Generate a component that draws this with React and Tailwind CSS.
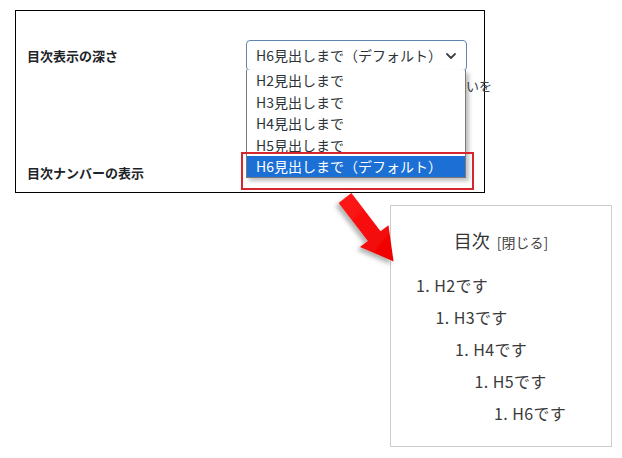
import React from "react";
import { ChevronDown } from "lucide-react";

const jp = { fontFamily: '"Noto Sans CJK JP", "Noto Sans", sans-serif' };

function Arrow() {
  return (
    <svg className="absolute left-0 top-0 pointer-events-none" width="622" height="458" viewBox="0 0 622 458">
      <defs>
        <filter id="sh" x="-30%" y="-30%" width="160%" height="160%">
          <feDropShadow dx="-3" dy="3" stdDeviation="2" floodColor="#777" floodOpacity="0.55" />
        </filter>
        <linearGradient id="rg" x1="0" y1="0" x2="1" y2="1">
          <stop offset="0" stopColor="#ff1a1a" />
          <stop offset="1" stopColor="#ee0000" />
        </linearGradient>
      </defs>
      <polygon
        filter="url(#sh)"
        fill="url(#rg)"
        points="338.6,202.9 351.4,193.1 380.6,231.2 388.5,225.2 393.6,261.5 359.9,247.0 367.8,241.0"
      />
    </svg>
  );
}

export default function App() {
  const items = ["H2見出しまで", "H3見出しまで", "H4見出しまで", "H5見出しまで"];
  const toc = ["H2", "H3", "H4", "H5", "H6"];
  return (
    <div className="relative w-[622px] h-[458px] bg-white overflow-hidden" style={jp}>
      <div className="flex flex-col pl-[15px] pt-[10px]">
        {/* top settings box */}
        <div className="relative w-[470px] h-[183px] border border-black flex flex-col pl-[11px] pt-[29px]">
          <div className="flex items-center h-[31px]">
            <div className="w-[219px] text-[13px] font-bold text-[#1d2327]">目次表示の深さ</div>
            <div className="w-[221px] h-[31px] border border-[#5f86b0] rounded-[4px] flex items-center justify-between pl-[9px] pr-[7px] text-[14px] text-[#2c3338] bg-white">
              <span>H6見出しまで（デフォルト）</span>
              <ChevronDown size={16} strokeWidth={2.75} color="#3c434a" />
            </div>
          </div>
          <div className="ml-[217px] mt-[5px] h-[20px] w-[248px] shrink-0 flex items-center justify-between text-[13px] text-[#3c434a] leading-[20px] whitespace-nowrap">
            <span className="text-[#8a3a3a]">（</span>
            <span>いを</span>
          </div>
          <div className="mt-[67px] h-[20px] flex items-center text-[13px] font-bold text-[#1d2327]">目次ナンバーの表示</div>

          {/* open dropdown list */}
          <div className="absolute left-[230px] top-[59px] w-[220px] bg-white border-x border-b border-[#7a7a7a] shadow-[3px_3px_4px_rgba(0,0,0,0.25)] flex flex-col text-[14px] text-[#2c3338]">
            {items.map((t) => (
              <div key={t} className="h-[21.5px] leading-[21.5px] pl-[9px]">{t}</div>
            ))}
            <div className="h-[21px] leading-[21px] pl-[9px] bg-[#1c6fd4] text-white">H6見出しまで（デフォルト）</div>
          </div>

          {/* red highlight frame */}
          <div className="absolute left-[225px] top-[141px] w-[233px] h-[38px] border-2 border-[#d4262c]" />
        </div>

        {/* TOC preview box */}
        <div className="ml-[375px] mt-[12px] w-[222px] h-[242px] border border-[#cccccc] flex flex-col pt-[20px] text-[#333]">
          <div className="flex items-baseline justify-center h-[28px] leading-[28px]">
            <span className="text-[18px] text-[#333]">目次</span>
            <span className="ml-[7px] text-[14px] text-[#444]">[閉じる]</span>
          </div>
          <div className="mt-[15px] flex flex-col">
            {toc.map((h, i) => (
              <div
                key={h}
                className="h-[32px] leading-[32px] text-[16px] tracking-[0.4px] text-[#3a3a3a]"
                style={{ paddingLeft: 25 + i * 19.5 }}
              >
                1. {h}です
              </div>
            ))}
          </div>
        </div>
      </div>
      <Arrow />
    </div>
  );
}
